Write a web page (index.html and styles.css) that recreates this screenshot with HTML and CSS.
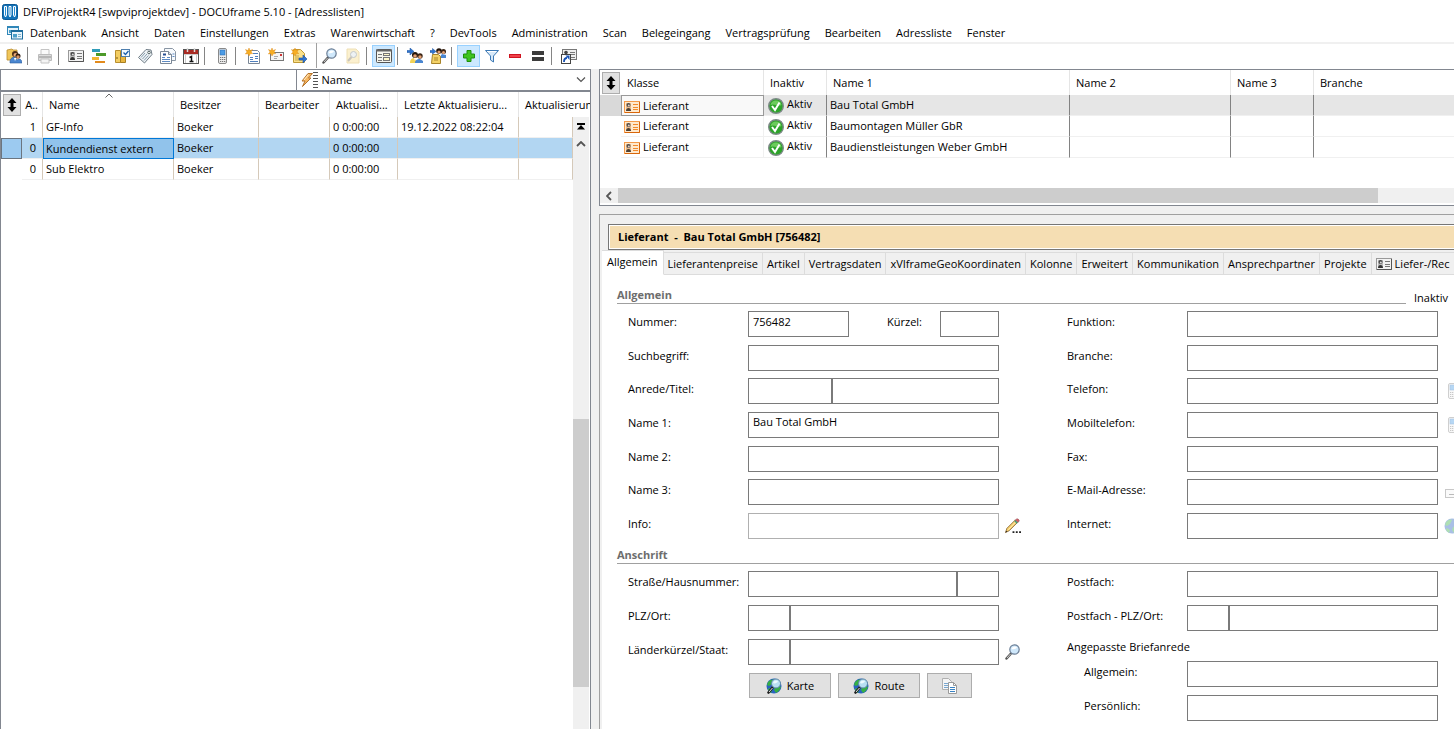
FILE: index.html
```html
<!DOCTYPE html>
<html lang="de">
<head>
  <meta charset="UTF-8">
  <title>DOCUframe 5.10 - Adresslisten</title>
  <link rel="stylesheet" href="styles.css">
</head>
<body>
  <!-- icon set -->
  <svg class="sprite" aria-hidden="true">
    <symbol id="i-app" viewBox="0 0 16 16">
      <rect x="0.5" y="0.5" width="15" height="15" rx="2" fill="#1272b8" stroke="#0d5a96"/>
      <path d="M2.500 2.500h2v8.500l-1 2-1-2zM7 2.500h2v8.500l-1 2-1-2zM11.500 2.500h2v8.500l-1 2-1-2z" fill="#2b8fd2" stroke="#fff"/>
    </symbol>
    <symbol id="i-mdi" viewBox="0 0 16 14">
      <rect x="0.5" y="0.5" width="11" height="8" fill="#e8f4fb" stroke="#2f86b8"/>
      <path d="M0 1h12" stroke="#2f86b8" stroke-width="2"/>
      <rect x="2" y="4" width="3" height="3" fill="#4b9fc9"/>
      <rect x="4.500" y="4.500" width="11" height="8.500" fill="#e8f4fb" stroke="#1d6d9e"/>
      <path d="M4 5h12" stroke="#1d6d9e" stroke-width="2"/>
      <rect x="6" y="8" width="4" height="3.500" fill="#4b9fc9"/>
      <path d="M11 8.500h3M11 10.500h3" stroke="#7fb4d0"/>
    </symbol>
    <symbol id="i-person" viewBox="0 0 16 16">
      <path d="M1 2l5-1 1 1h4v8l-4 2H1z" fill="#f0c65a" stroke="#b98b2c" stroke-width="0.800"/>
      <circle cx="9" cy="6" r="3" fill="#4a2c18"/><circle cx="9.500" cy="7" r="2" fill="#e8a878"/>
      <circle cx="12" cy="8" r="2.500" fill="#2e1c10"/><circle cx="12" cy="9" r="1.700" fill="#d89468"/>
      <path d="M4 14c0-4 3-5 5-5l2 3 2-1c2 0 3 2 3 4H4z" fill="#4a86d0" stroke="#2a5a9a" stroke-width="0.600"/>
      <path d="M8 10l1 3 1.500-3z" fill="#fff"/>
    </symbol>
    <symbol id="i-print" viewBox="0 0 16 16">
      <path d="M4 7V1.500h8V7" fill="#fafafa" stroke="#c4c4c4"/>
      <path d="M1.500 6.500h13v6h-13z" fill="#dcdcdc" stroke="#bcbcbc"/>
      <path d="M2 9h12" stroke="#aaa" stroke-width="1.500"/>
      <path d="M4 11h8v4H4z" fill="#f4f4f4" stroke="#c4c4c4"/>
    </symbol>
    <symbol id="i-card" viewBox="0 0 16 12">
      <rect x="0.500" y="0.500" width="15" height="11" fill="#f2f2f2" stroke="#999"/>
      <path d="M1 11.500h14.500V1" fill="none" stroke="#555"/>
      <rect x="2" y="2" width="5" height="8" fill="#bbb"/>
      <circle cx="4.500" cy="4" r="2" fill="#444"/><path d="M2 10c0-4 5-4 5 0z" fill="#333"/>
      <circle cx="4.800" cy="4.400" r="1" fill="#ddd"/>
      <path d="M9 3.500h5M9 6.500h5M9 8.500h5" stroke="#777"/>
    </symbol>
    <symbol id="i-ocard" viewBox="0 0 16 12">
      <rect x="0.500" y="0.500" width="15" height="11" fill="#ffe9cd" stroke="#f39a4a"/>
      <path d="M1 11.500h14.500V1" fill="none" stroke="#d8660a"/>
      <rect x="2" y="2" width="5" height="8" fill="#e9b98a"/>
      <circle cx="4.500" cy="4" r="2" fill="#4a4a4a"/><path d="M2 10c0-4 5-4 5 0z" fill="#4a4036"/>
      <circle cx="4.800" cy="4.400" r="1" fill="#e8d0c0"/>
      <path d="M9 3.500h5M9 6.500h5M9 8.500h5" stroke="#f08a2c"/>
    </symbol>
    <symbol id="i-gantt" viewBox="0 0 16 16">
      <path d="M1 2.500h8" stroke="#2f9cb8" stroke-width="3"/>
      <path d="M5 6.500h10" stroke="#4d9a2a" stroke-width="3"/>
      <path d="M1 10.500h7" stroke="#f2b632" stroke-width="3"/>
      <path d="M4 14h10" stroke="#e28a1c" stroke-width="2"/>
    </symbol>
    <symbol id="i-folder" viewBox="0 0 16 16">
      <path d="M1.500 2.500h5v12h-5z" fill="#f3cd62" stroke="#b98f2e"/>
      <path d="M6.500 4.500h5v10h-5z" fill="#e8b640" stroke="#a87f22"/>
      <rect x="7.500" y="1.500" width="8" height="7" fill="#f4faff" stroke="#4f7fae"/>
      <path d="M9.500 4.500l2 2 3-3.500" fill="none" stroke="#1a5fae" stroke-width="1.300"/>
      <path d="M3 9v2" stroke="#7a5a12"/>
    </symbol>
    <symbol id="i-tag" viewBox="0 0 16 16">
      <path d="M1.500 9.500l7.500-8 5 0.500 1 4.500-7.500 8.500z" fill="#edf2f5" stroke="#6f7c86"/>
      <circle cx="12" cy="4.500" r="1.300" fill="#fff" stroke="#566"/>
      <path d="M4 9.500l4-4.500M5.500 11l4.500-5M7 12.500l4.500-5" stroke="#7d94a6" stroke-width="0.900"/>
    </symbol>
    <symbol id="i-docs" viewBox="0 0 16 16">
      <path d="M4.500 0.500h8l3 3v9h-11z" fill="#f7fafd" stroke="#8a96a4"/>
      <path d="M12.500 6h2M12.500 8.500h2" stroke="#5d8ac4"/>
      <path d="M0.500 3.500h8l3 3v9h-11z" fill="#fff" stroke="#7a8796"/>
      <path d="M8.500 3.500v3h3" fill="#d5dde6" stroke="#7a8796"/>
      <path d="M2 9.500h3M7 9.500h3M2 11.500h8M2 13.500h8" stroke="#5d8ac4"/>
      <path d="M3 6.500h3" stroke="#274f93" stroke-width="2"/>
    </symbol>
    <symbol id="i-cal" viewBox="0 0 16 16">
      <rect x="0.500" y="1.500" width="15" height="14" fill="#fff" stroke="#555"/>
      <rect x="1" y="2" width="14" height="4" fill="#a82a22"/>
      <path d="M4.500 0v4M11.500 0v4" stroke="#ddd" stroke-width="1.500"/>
      <path d="M1 6.500h14M2.500 7v8M13.500 7v8" stroke="#ccc"/>
      <path d="M6.500 9.500l2-1v5M6.500 13.500h4" fill="none" stroke="#111" stroke-width="1.500"/>
    </symbol>
    <symbol id="i-phone" viewBox="0 0 16 16">
      <rect x="4.500" y="0.500" width="8" height="15" rx="1.500" fill="#eee" stroke="#8a8a8a"/>
      <rect x="6" y="2" width="5" height="5" fill="#4c9ce6" stroke="#2e70b4" stroke-width="0.600"/>
      <path d="M6 9.500h1.300M8 9.500h1.300M10 9.500h1.300M6 11.500h1.300M8 11.500h1.300M10 11.500h1.300M6 13.500h1.300M8 13.500h1.300M10 13.500h1.300" stroke="#777"/>
    </symbol>
    <symbol id="i-star" viewBox="0 0 8 8">
      <path d="M4 0l1 2.600L7.500 1.500 6 4l1.800 1.500-2.500.3L4 8 3 5.700.3 6 2 4 .5 1.500 3 2.600z" fill="#f7ae22" stroke="#d9820e" stroke-width="0.400"/>
    </symbol>
    <symbol id="i-newdoc" viewBox="0 0 16 16">
      <path d="M3.500 2.500h9l2 2v11h-11z" fill="#fff" stroke="#7a8796"/>
      <path d="M8 5.500h5M5 9.500h3M10 8.500h3M10 10.500h3M5 11.500h3M5 13.500h8" stroke="#4f7fbe"/>
      <use href="#i-star" width="8" height="8"/>
    </symbol>
    <symbol id="i-newmail" viewBox="0 0 16 16">
      <rect x="2.500" y="4.500" width="13" height="8" fill="#f4f4f4" stroke="#777"/>
      <path d="M6 8.500h4M6 10.500h3" stroke="#aaa"/><rect x="12" y="6" width="2" height="2" fill="#c33"/>
      <use href="#i-star" width="8" height="8"/>
    </symbol>
    <symbol id="i-newgo" viewBox="0 0 16 16">
      <path d="M2.500 1.500h7l4 4v9h-11z" fill="#f9e08a" stroke="#c09a36"/>
      <path d="M4 8h4M4 10h4M4 12h7" stroke="#c9a54a"/>
      <path d="M8 10h4V7l4 4-4 4v-3H8z" fill="#2f74d0" stroke="#174f9a" stroke-width="0.600"/>
      <use href="#i-star" width="8" height="8"/>
    </symbol>
    <symbol id="i-lens" viewBox="0 0 16 16">
      <path d="M6 9.500L1.500 14.500" stroke="#555" stroke-width="2.500" stroke-linecap="round"/>
      <path d="M5.500 10L2 14" stroke="#ccc" stroke-width="1"/>
      <circle cx="9.500" cy="5.500" r="4.700" fill="#cfe8fb" stroke="#6c7f96" stroke-width="1.200"/>
      <path d="M6.500 5c.5-2.500 4-3.500 5.500-1.500-1 1.500-3 2-5.500 1.500z" fill="#fff"/>
    </symbol>
    <symbol id="i-lensdoc" viewBox="0 0 16 16">
      <path d="M2 1h9l3 3v11H2z" fill="#fbf0cf" stroke="#eedfb4"/>
      <circle cx="8.500" cy="6.500" r="3" fill="#eef2f4" stroke="#c4c8cb"/>
      <path d="M6.500 9L3 13" stroke="#c8c4bb" stroke-width="2"/>
    </symbol>
    <symbol id="i-form" viewBox="0 0 16 16">
      <rect x="0.500" y="1.500" width="15" height="13" rx="1" fill="#f6f6ee" stroke="#555"/>
      <path d="M0 2.500h16" stroke="#666" stroke-width="2"/>
      <path d="M2 6.500h4M2 9.500h4M2 12.500h4" stroke="#777"/>
      <rect x="7.500" y="5.500" width="6" height="2" fill="#fff8c8" stroke="#777"/>
      <rect x="7.500" y="9.500" width="6" height="3" fill="#fff8c8" stroke="#777"/>
    </symbol>
    <symbol id="i-group" viewBox="0 0 16 16">
      <path d="M0 2.500h3V0l4 3.500L3 7V4.500H0z" fill="#2f74d0" stroke="#174f9a" stroke-width="0.500"/>
      <circle cx="8" cy="7" r="3" fill="#22150c"/><circle cx="8" cy="8" r="1.800" fill="#e2a074"/>
      <circle cx="13" cy="8" r="2.700" fill="#3a2414"/><circle cx="13" cy="9" r="1.700" fill="#e2a074"/>
      <path d="M3 15c0-4 2-5 5-5l2 5z" fill="#f2d254"/><path d="M8 15c0-3 2-4 5-4l3 2v2z" fill="#4a86d0"/>
      <path d="M7 10l1 3 1-3z" fill="#fff"/>
    </symbol>
    <symbol id="i-groupdoc" viewBox="0 0 16 16">
      <circle cx="9" cy="3" r="2.800" fill="#22150c"/><circle cx="9" cy="4" r="1.600" fill="#e2a074"/>
      <circle cx="13.500" cy="3.500" r="2.500" fill="#3a2414"/><circle cx="13.500" cy="4.500" r="1.500" fill="#e2a074"/>
      <path d="M9 10l3-4 4 1v3z" fill="#4a86d0"/>
      <path d="M2.500 6.500h6l2 2v7h-9z" fill="#f3d268" stroke="#a8842a"/>
      <path d="M4 10h4M4 12h4" stroke="#a8842a"/>
      <path d="M0 2.500h2.500V0.500L6 3.500 2.500 6V4.500H0z" fill="#2f74d0" stroke="#174f9a" stroke-width="0.500"/>
    </symbol>
    <symbol id="i-plus" viewBox="0 0 16 16">
      <path d="M6 2.500h4V6h3.500v4H10v3.500H6V10H2.500V6H6z" fill="#3fc41e" stroke="#1f8f0c"/>
    </symbol>
    <symbol id="i-filter" viewBox="0 0 16 16">
      <path d="M1.500 2.500h13L9.500 8v6l-3-2V8z" fill="#d6e8f8" stroke="#3b78b4"/>
      <path d="M3 3.500h9" stroke="#fff"/>
    </symbol>
    <symbol id="i-minus" viewBox="0 0 16 16">
      <rect x="2.500" y="6.500" width="11" height="3" fill="#f0424a" stroke="#cf1420"/>
    </symbol>
    <symbol id="i-equal" viewBox="0 0 16 16">
      <path d="M2 5h12M2 11h12" stroke="#3c3c3c" stroke-width="4"/>
    </symbol>
    <symbol id="i-link" viewBox="0 0 16 16">
      <rect x="1.500" y="1.500" width="14" height="10" fill="#eee" stroke="#777"/>
      <circle cx="5" cy="4.500" r="1.800" fill="#444"/><path d="M9 4.500h5M9 6.500h5M10 9.500h4" stroke="#777"/>
      <rect x="0.500" y="6.500" width="9" height="9" fill="#fff" stroke="#444"/>
      <path d="M3 14c0-3 1-4 3-4" fill="none" stroke="#1450b4" stroke-width="1.800"/>
      <path d="M4.500 7.500h4v4.500z" fill="#1450b4"/>
    </symbol>
    <symbol id="i-flash" viewBox="0 0 12 14">
      <path d="M7 0.500h4.500L7.500 5H10L1.500 13.500 4 8H1z" fill="#f6b660" stroke="#b5732a"/>
      <path d="M7.500 1.500L3 7" stroke="#fff0d0"/>
    </symbol>
    <symbol id="i-grip" viewBox="0 0 5 16">
      <path d="M0 0.500h5M0 3.500h5M0 6.500h5M0 9.500h5M0 12.500h5M0 15.500h5" stroke="#555"/>
    </symbol>
    <symbol id="i-updown" viewBox="0 0 10 14">
      <path d="M5 0l4.500 5H6.500v4h3L5 14 .5 9h3V5h-3z" fill="#000"/>
    </symbol>
    <symbol id="i-down" viewBox="0 0 10 6"><path d="M1 0.500l4 4 4-4" fill="none" stroke="#555" stroke-width="1.200"/></symbol>
    <symbol id="i-up" viewBox="0 0 10 6"><path d="M1 5l4-4 4 4" fill="none" stroke="#555" stroke-width="1.800"/></symbol>
    <symbol id="i-sort" viewBox="0 0 8 5"><path d="M0.500 4.500L4 1l3.500 3.500" fill="none" stroke="#666"/></symbol>
    <symbol id="i-left" viewBox="0 0 6 10"><path d="M5 1L1 5l4 4" fill="none" stroke="#555" stroke-width="1.800"/></symbol>
    <symbol id="i-top" viewBox="0 0 8 7"><path d="M0 1h8" stroke="#000" stroke-width="2"/><path d="M4 2l4 4.500H0z" fill="#000"/></symbol>
    <symbol id="i-check" viewBox="0 0 16 16">
      <circle cx="8" cy="8" r="7.300" fill="#2da32a" stroke="#7c8a86" stroke-width="1.400"/>
      <path d="M2.500 7a5.600 5.600 0 0 1 11 0C10 9 6 5 2.500 7z" fill="#6ccb5c"/>
      <path d="M4 8l3 4 4.500-7.500" fill="none" stroke="#fff" stroke-width="2"/>
    </symbol>
    <symbol id="i-pencil" viewBox="0 0 17 16">
      <path d="M0.500 15l1.500-4.500L11 1.500 13.500 4 4.500 13z" fill="#f5cd6a" stroke="#8a6a3a" stroke-width="0.900"/>
      <path d="M3.500 12L12 3" stroke="#fff0b8"/>
      <path d="M11 1.500l1.500-1c1-.5 3 1 2.500 2.500l-1.500 1z" fill="#d8606a" stroke="#8a4a50" stroke-width="0.600"/>
      <path d="M10.500 2.500l2.500 2.500" stroke="#3f9a7a" stroke-width="1.500"/>
      <path d="M0.500 15l.8-2 1.200 1.200z" fill="#222"/>
      <path d="M8 14.500h2M11.500 14.500h2M15 14.500h2" stroke="#222" stroke-width="2"/>
    </symbol>
    <symbol id="i-globe" viewBox="0 0 16 16">
      <circle cx="8" cy="8" r="7.500" fill="#2b62c0"/>
      <path d="M2 4c3-3 5-3 6-2L6 6 3 8 1 7zM9 9l4-1 2 1c-1 3-3 5-5 6l-2-3zM3 10l3 2-1 3c-2-1-3-3-3-4z" fill="#36b044"/>
    </symbol>
    <symbol id="i-map" viewBox="0 0 16 16">
      <use href="#i-globe" width="16" height="16"/>
      <path d="M7 9L2.500 14.500" stroke="#222" stroke-width="2.600" stroke-linecap="round"/>
      <path d="M6.500 10L3 14" stroke="#ddd"/>
      <circle cx="10" cy="5.500" r="4.500" fill="#b8dff2" stroke="#5d87a4"/>
      <path d="M7 5c1-3 4-3 5-1.500C11 5 9 6 7 5z" fill="#eefaff"/>
    </symbol>
    <symbol id="i-copy" viewBox="0 0 16 16">
      <path d="M0.500 0.500h6l3 3v8h-9z" fill="#f5f5f5" stroke="#b0b0b0"/>
      <path d="M2 5.500h5M2 7.500h4M2 9.500h4" stroke="#7aa7cf"/>
      <path d="M6.500 4.500h5l3 3v8h-8z" fill="#fff" stroke="#9a9a9a"/>
      <path d="M11.500 4.500v3h3" fill="none" stroke="#9a9a9a"/>
      <path d="M8 9.500h5M8 11.500h5M8 13.500h5" stroke="#3a83c4"/>
    </symbol>
    <symbol id="i-mail" viewBox="0 0 16 16">
      <rect x="1.500" y="5.500" width="13" height="8" fill="#f4f4f4" stroke="#777"/>
      <path d="M5 10.500h5" stroke="#555"/>
    </symbol>
  </svg>

  <div class="window">
    <header class="titlebar">
      <svg class="icon"><use href="#i-app"/></svg>
      <span>DFViProjektR4 [swpviprojektdev] - DOCUframe 5.10 - [Adresslisten]</span>
    </header>

    <nav class="menubar">
      <svg class="icon"><use href="#i-mdi"/></svg>
      <button>Datenbank</button>
      <button>Ansicht</button>
      <button>Daten</button>
      <button>Einstellungen</button>
      <button>Extras</button>
      <button>Warenwirtschaft</button>
      <button>?</button>
      <button>DevTools</button>
      <button>Administration</button>
      <button>Scan</button>
      <button>Belegeingang</button>
      <button>Vertragsprüfung</button>
      <button>Bearbeiten</button>
      <button>Adressliste</button>
      <button>Fenster</button>
    </nav>

    <div class="toolbar">
      <button aria-label="Benutzer"><svg class="icon"><use href="#i-person"/></svg></button>
      <span class="sep"></span>
      <button aria-label="Drucken" disabled><svg class="icon"><use href="#i-print"/></svg></button>
      <span class="sep"></span>
      <button aria-label="Adressen"><svg class="id-card"><use href="#i-card"/></svg></button>
      <button aria-label="Projekte"><svg class="icon"><use href="#i-gantt"/></svg></button>
      <button aria-label="Aufgaben"><svg class="icon"><use href="#i-folder"/></svg></button>
      <button aria-label="Artikel"><svg class="icon"><use href="#i-tag"/></svg></button>
      <button aria-label="Dokumente"><svg class="icon"><use href="#i-docs"/></svg></button>
      <button aria-label="Kalender"><svg class="icon"><use href="#i-cal"/></svg></button>
      <span class="sep"></span>
      <button aria-label="Telefon"><svg class="icon"><use href="#i-phone"/></svg></button>
      <span class="sep"></span>
      <button aria-label="Neues Dokument"><svg class="icon"><use href="#i-newdoc"/></svg></button>
      <button aria-label="Neue E-Mail"><svg class="icon"><use href="#i-newmail"/></svg></button>
      <button aria-label="Neue Notiz"><svg class="icon"><use href="#i-newgo"/></svg></button>
      <span class="sep sep-full"></span>
      <button aria-label="Suchen"><svg class="icon"><use href="#i-lens"/></svg></button>
      <button aria-label="Suche im Dokument" disabled><svg class="icon"><use href="#i-lensdoc"/></svg></button>
      <span class="sep"></span>
      <button aria-label="Maske" class="pressed"><svg class="icon"><use href="#i-form"/></svg></button>
      <span class="sep"></span>
      <button aria-label="Gruppe"><svg class="icon"><use href="#i-group"/></svg></button>
      <button aria-label="Gruppendokument"><svg class="icon"><use href="#i-groupdoc"/></svg></button>
      <span class="sep"></span>
      <button aria-label="Hinzufügen" class="pressed"><svg class="icon"><use href="#i-plus"/></svg></button>
      <button aria-label="Filter"><svg class="icon"><use href="#i-filter"/></svg></button>
      <button aria-label="Entfernen"><svg class="icon"><use href="#i-minus"/></svg></button>
      <button aria-label="Gleich"><svg class="icon"><use href="#i-equal"/></svg></button>
      <span class="sep"></span>
      <button aria-label="Verknüpfung"><svg class="icon"><use href="#i-link"/></svg></button>
    </div>

    <main class="workspace">
      <section class="list-pane">
        <div class="search-row">
          <input type="text" aria-label="Suche">
          <div class="combo">
            <svg class="flash"><use href="#i-flash"/></svg>
            <svg class="grip"><use href="#i-grip"/></svg>
            <select aria-label="Suchfeld"><option>Name</option></select>
            <svg class="chevron"><use href="#i-down"/></svg>
          </div>
        </div>
        <div class="list-body">
          <table class="grid lists">
            <colgroup>
              <col class="w-mark"><col class="w-num"><col class="w-name"><col class="w-owner"><col class="w-editor"><col class="w-akt"><col class="w-last"><col><col class="w-scroll">
            </colgroup>
            <thead>
              <tr>
                <th class="mark"><button class="fit" aria-label="Zeilen anpassen"><svg><use href="#i-updown"/></svg></button></th>
                <th class="num">A..</th>
                <th class="sorted">Name<svg><use href="#i-sort"/></svg></th>
                <th>Besitzer</th>
                <th>Bearbeiter</th>
                <th>Aktualisi...</th>
                <th>Letzte Aktualisieru...</th>
                <th colspan="2">Aktualisierun</th>
              </tr>
            </thead>
            <tbody>
              <tr><td class="mark"></td><td class="num">1</td><td>GF-Info</td><td>Boeker</td><td></td><td>0 0:00:00</td><td>19.12.2022 08:22:04</td><td></td><td class="mark"></td></tr>
              <tr class="selected"><td class="mark"></td><td class="num">0</td><td class="focus">Kundendienst extern</td><td>Boeker</td><td></td><td>0 0:00:00</td><td></td><td></td><td class="mark"></td></tr>
              <tr><td class="mark"></td><td class="num">0</td><td>Sub Elektro</td><td>Boeker</td><td></td><td>0 0:00:00</td><td></td><td></td><td class="mark"></td></tr>
            </tbody>
          </table>
          <div class="vscroll">
            <button aria-label="Zum Anfang"><svg class="to-top"><use href="#i-top"/></svg></button>
            <button aria-label="Nach oben"><svg class="up"><use href="#i-up"/></svg></button>
            <div class="vtrack"><div class="vthumb"></div></div>
          </div>
        </div>
      </section>

      <div class="detail-pane">
        <section class="addresses">
          <table class="grid results">
            <colgroup>
              <col class="r-mark"><col class="r-klasse"><col class="r-inaktiv"><col class="r-name1"><col class="r-name2"><col class="r-name3"><col>
            </colgroup>
            <thead>
              <tr>
                <th class="mark"><button class="fit" aria-label="Zeilen anpassen"><svg><use href="#i-updown"/></svg></button></th>
                <th>Klasse</th><th>Inaktiv</th><th>Name 1</th><th>Name 2</th><th>Name 3</th><th>Branche</th>
              </tr>
            </thead>
            <tbody>
              <tr class="current"><td class="mark"></td><td class="focus"><svg class="card"><use href="#i-ocard"/></svg>Lieferant</td><td><svg class="check"><use href="#i-check"/></svg>Aktiv</td><td>Bau Total GmbH</td><td></td><td></td><td></td></tr>
              <tr><td class="mark"></td><td><svg class="card"><use href="#i-ocard"/></svg>Lieferant</td><td><svg class="check"><use href="#i-check"/></svg>Aktiv</td><td>Baumontagen Müller GbR</td><td></td><td></td><td></td></tr>
              <tr><td class="mark"></td><td><svg class="card"><use href="#i-ocard"/></svg>Lieferant</td><td><svg class="check"><use href="#i-check"/></svg>Aktiv</td><td>Baudienstleistungen Weber GmbH</td><td></td><td></td><td></td></tr>
            </tbody>
          </table>
          <div class="hscroll">
            <button aria-label="Nach links"><svg><use href="#i-left"/></svg></button>
            <div class="hthumb"></div>
          </div>
        </section>

        <section class="record">
          <h1 class="banner">Lieferant &nbsp;-&nbsp; Bau Total GmbH [756482]</h1>
          <div class="tabs" role="tablist">
            <button role="tab" aria-selected="true" class="active">Allgemein</button>
            <button role="tab">Lieferantenpreise</button>
            <button role="tab">Artikel</button>
            <button role="tab">Vertragsdaten</button>
            <button role="tab">xVIframeGeoKoordinaten</button>
            <button role="tab">Kolonne</button>
            <button role="tab">Erweitert</button>
            <button role="tab">Kommunikation</button>
            <button role="tab">Ansprechpartner</button>
            <button role="tab">Projekte</button>
            <button role="tab"><svg class="card"><use href="#i-card"/></svg>Liefer-/Rec</button>
          </div>

          <form class="sheet">
            <div class="section-head">
              <h2>Allgemein</h2>
              <span class="state">Inaktiv</span>
            </div>
            <div class="columns general">
              <div class="col">
                <div class="field">
                  <label for="nummer">Nummer:</label>
                  <div class="control">
                    <input id="nummer" class="medium" value="756482">
                    <label for="kuerzel" class="inner">Kürzel:</label>
                    <input id="kuerzel">
                  </div>
                </div>
                <div class="field"><label for="such">Suchbegriff:</label><div class="control"><input id="such"></div></div>
                <div class="field"><label for="anrede">Anrede/Titel:</label><div class="control split"><input id="anrede" class="title"><input aria-label="Titel"></div></div>
                <div class="field"><label for="name1">Name 1:</label><div class="control"><input id="name1" value="Bau Total GmbH"></div></div>
                <div class="field"><label for="name2">Name 2:</label><div class="control"><input id="name2"></div></div>
                <div class="field"><label for="name3">Name 3:</label><div class="control"><input id="name3"></div></div>
                <div class="field"><label for="info">Info:</label><div class="control"><input id="info" class="light" readonly></div><button type="button" class="tool" aria-label="Info bearbeiten"><svg class="icon"><use href="#i-pencil"/></svg></button></div>
              </div>
              <div class="col">
                <div class="field"><label for="funktion">Funktion:</label><div class="control"><input id="funktion"></div></div>
                <div class="field"><label for="branche">Branche:</label><div class="control"><input id="branche"></div></div>
                <div class="field"><label for="telefon">Telefon:</label><div class="control"><input id="telefon"></div><button type="button" class="tool" aria-label="Anrufen" disabled><svg class="icon"><use href="#i-phone"/></svg></button></div>
                <div class="field"><label for="mobil">Mobiltelefon:</label><div class="control"><input id="mobil"></div><button type="button" class="tool" aria-label="Mobil anrufen" disabled><svg class="icon"><use href="#i-phone"/></svg></button></div>
                <div class="field"><label for="fax">Fax:</label><div class="control"><input id="fax"></div></div>
                <div class="field"><label for="mail">E-Mail-Adresse:</label><div class="control"><input id="mail"></div><button type="button" class="tool" aria-label="E-Mail schreiben" disabled><svg class="icon"><use href="#i-mail"/></svg></button></div>
                <div class="field"><label for="web">Internet:</label><div class="control"><input id="web"></div><button type="button" class="tool" aria-label="Webseite öffnen" disabled><svg class="icon"><use href="#i-globe"/></svg></button></div>
              </div>
            </div>

            <div class="section-head address-head">
              <h2>Anschrift</h2>
            </div>
            <div class="columns">
              <div class="col address">
                <div class="field"><label for="strasse">Straße/Hausnummer:</label><div class="control split"><input id="strasse"><input class="short" aria-label="Hausnummer"></div></div>
                <div class="field"><label for="plz">PLZ/Ort:</label><div class="control split"><input id="plz" class="short"><input aria-label="Ort"></div></div>
                <div class="field"><label for="land">Länderkürzel/Staat:</label><div class="control split"><input id="land" class="short"><input aria-label="Staat"></div><button type="button" class="tool" aria-label="Staat suchen"><svg class="icon"><use href="#i-lens"/></svg></button></div>
                <div class="actions">
                  <button type="button"><svg class="icon"><use href="#i-map"/></svg>Karte</button>
                  <button type="button"><svg class="icon"><use href="#i-map"/></svg>Route</button>
                  <button type="button" class="copy" aria-label="Kopieren"><svg class="icon"><use href="#i-copy"/></svg></button>
                </div>
              </div>
              <div class="col address">
                <div class="field"><label for="postfach">Postfach:</label><div class="control"><input id="postfach"></div></div>
                <div class="field"><label for="pfplz">Postfach - PLZ/Ort:</label><div class="control split"><input id="pfplz" class="short"><input aria-label="Postfach Ort"></div></div>
                <p class="caption">Angepasste Briefanrede</p>
                <div class="field sub"><label for="anr-allg">Allgemein:</label><div class="control"><input id="anr-allg"></div></div>
                <div class="field sub"><label for="anr-pers">Persönlich:</label><div class="control"><input id="anr-pers"></div></div>
              </div>
            </div>
          </form>
        </section>
      </div>
    </main>
  </div>
</body>
</html>
```
FILE: styles.css
```css
* {
  box-sizing: border-box;
}

body {
  margin: 0;
  background: #fff;
  color: #000;
  font-family: "Open Sans", "Noto Sans", sans-serif;
  font-size: 11px;
  line-height: 16px;
}

button,
input,
select {
  font: inherit;
  color: inherit;
  margin: 0;
  padding: 0;
  border: 0;
  background: none;
  border-radius: 0;
}

svg {
  display: block;
  flex: none;
}

.sprite {
  position: absolute;
  width: 0;
  height: 0;
}

.icon {
  width: 16px;
  height: 16px;
}

.window {
  display: flex;
  flex-direction: column;
  height: 100vh;
  overflow: hidden;
}

/* title, menu and toolbar */
.titlebar {
  display: flex;
  align-items: center;
  gap: 5px;
  height: 23px;
  padding-left: 2px;
}

.menubar {
  display: flex;
  align-items: center;
  gap: 15px;
  height: 19px;
  padding-left: 7px;
  white-space: nowrap;
}

.menubar .icon {
  margin-right: -8px;
}

.toolbar {
  display: flex;
  align-items: center;
  height: 27px;
  padding: 0 0 2px 2px;
  border-top: 2px solid #f0f0f0;
}

.toolbar button {
  display: flex;
  align-items: center;
  justify-content: center;
  width: 23px;
  height: 22px;
}

.toolbar .pressed {
  background: #cce8ff;
  border: 1px solid #99d1ff;
}

.id-card {
  width: 16px;
  height: 12px;
}

.sep {
  width: 8px;
  height: 18px;
  padding-left: 2px;
}

.sep::before {
  content: "";
  display: block;
  width: 1px;
  height: 100%;
  background: #858585;
}

.sep-full {
  height: 25px;
  padding-left: 6px;
}

.sep-full::before {
  background: #a0a0a0;
}

/* panes */
.workspace {
  flex: 1;
  display: grid;
  grid-template-columns: 591px minmax(0, 1fr);
  column-gap: 8px;
  min-height: 0;
  background: #f0f0f0;
}

.list-pane {
  display: flex;
  flex-direction: column;
  min-width: 0;
  background: #fff;
  border-left: 1px solid #828790;
  border-right: 1px solid #828790;
}

.search-row {
  display: grid;
  grid-template-columns: 1fr 1fr;
  height: 23px;
  border-top: 1px solid #828790;
  border-bottom: 2px solid #828790;
}

.search-row input {
  min-width: 0;
  padding: 0 4px;
}

.combo {
  display: flex;
  align-items: center;
  min-width: 0;
  padding: 0 4px;
  border-left: 1px solid #828790;
}

.flash {
  width: 12px;
  height: 14px;
}

.grip {
  width: 5px;
  height: 16px;
}

.combo select {
  flex: 1;
  padding-left: 4px;
  appearance: none;
}

.chevron {
  width: 10px;
  height: 6px;
}

.list-body {
  flex: 1;
  position: relative;
  overflow: hidden;
}

/* data grids */
.grid {
  width: 100%;
  table-layout: fixed;
  border-collapse: separate;
  border-spacing: 0;
  white-space: nowrap;
}

.grid th {
  height: 25px;
  padding: 0 0 0 6px;
  border-right: 1px solid #e5e5e5;
  font-weight: 400;
  text-align: left;
  overflow: hidden;
}

.grid td {
  height: 21px;
  padding: 0 0 0 3px;
  border-right: 1px solid #d5c9b9;
  border-bottom: 1px solid #f0f0f0;
  overflow: hidden;
}

.grid .focus {
  padding-left: 2px;
}

.grid .mark {
  padding: 0;
  border-right: 0;
  border-bottom-color: transparent;
}

.grid th:last-child,
.results td:last-child {
  border-right: 0;
}

.fit {
  display: flex;
  align-items: center;
  justify-content: center;
  width: 18px;
  height: 22px;
  margin-left: 2px;
  background: #e1e1e1;
  border: 1px solid #adadad;
}

.fit svg {
  width: 10px;
  height: 14px;
}

.grid .num {
  padding: 0 6px 0 0;
  text-align: right;
}

.grid th.num {
  padding: 0 4px 0 0;
}

.sorted {
  position: relative;
}

.sorted svg {
  position: absolute;
  top: 1px;
  left: 62px;
  width: 8px;
  height: 5px;
}

.w-mark { width: 21px; }
.w-num { width: 21px; }
.w-name { width: 131px; }
.w-owner { width: 85px; }
.w-editor { width: 71px; }
.w-akt { width: 68px; }
.w-last { width: 121px; }
.w-scroll { width: 17px; }

.lists .selected td {
  background: #b2d6f2;
}

.lists .selected .focus {
  background: #91c3eb;
  border: 1px solid #0078d7;
}

.lists .selected .mark:first-child {
  background: #9ccaf0;
  border: 1px solid #6b7580;
}

.lists .selected .mark:last-child {
  background: none;
}

.vscroll {
  position: absolute;
  top: 25px;
  right: 1px;
  bottom: 0;
  display: flex;
  flex-direction: column;
  width: 16px;
  background: #f0f0f0;
}

.vscroll button {
  display: flex;
  align-items: center;
  justify-content: center;
  height: 18px;
}

.to-top {
  width: 8px;
  height: 7px;
}

.up {
  width: 10px;
  height: 6px;
}

.vtrack {
  display: grid;
  flex: 1;
  grid-template-rows: 266fr 268fr 42fr;
}

.vthumb {
  grid-row: 2;
  background: #cdcdcd;
}

.detail-pane {
  display: flex;
  flex-direction: column;
  gap: 8px;
  min-width: 0;
}

.addresses {
  background: #fff;
  border: solid #828790;
  border-width: 1px 0 1px 1px;
}

.r-mark { width: 21px; }
.r-klasse { width: 143px; }
.r-inaktiv { width: 63px; }
.r-name1 { width: 243px; }
.r-name2 { width: 161px; }
.r-name3 { width: 83px; }

.results {
  margin-bottom: 30px;
}

.results td {
  border-right-color: #828282;
}

.results td:nth-child(2) {
  border-right-color: #f0f0f0;
}

.results td svg {
  display: inline-block;
  vertical-align: middle;
}

.card {
  width: 16px;
  height: 12px;
  margin-right: 3px;
}

.check {
  width: 16px;
  height: 16px;
  margin: 0 3px 0 1px;
}

.current td {
  background: #e6e6e6;
}

.current .mark {
  background: #d9d9d9;
}

.results .current .focus {
  background: #f9f9f9;
  border: 1px solid #999;
}

.hscroll {
  display: flex;
  height: 15px;
  margin-bottom: 2px;
  background: #f0f0f0;
}

.hscroll button {
  display: flex;
  align-items: center;
  justify-content: center;
  width: 18px;
}

.hscroll svg {
  width: 6px;
  height: 10px;
}

.hthumb {
  width: 89%;
  background: #cdcdcd;
}

/* record form */
.record {
  flex: 1;
  min-height: 0;
  overflow: hidden;
  padding: 9px 0 0 2px;
  border: solid #a0a0a0;
  border-width: 1px 0 0 1px;
}

.banner {
  height: 26px;
  margin: 0 0 0 6px;
  padding: 3px 9px;
  font-size: 11px;
  line-height: 18px;
  font-weight: 700;
  background: #f5deb3;
  border: solid #767676;
  border-width: 1px 0 1px 1px;
  box-shadow: inset 1px 1px #fff, inset 0 -1px #fff;
}

.tabs {
  display: flex;
  align-items: flex-end;
  height: 25px;
  white-space: nowrap;
}

.tabs button {
  display: flex;
  align-items: center;
  flex: none;
  height: 23px;
  padding: 0 4px;
  border: 1px solid #dcdcdc;
  border-left: 0;
}

.tabs .active {
  height: 25px;
  padding: 0 5px 1px;
  background: #fff;
  border-bottom-color: #fff;
}

.sheet {
  height: 100%;
  padding: 12px 0 0 15px;
  background: #fff;
}

.section-head {
  display: flex;
  align-items: flex-start;
  gap: 8px;
}

.section-head h2 {
  flex: 1;
  margin: 0 0 5px;
  font-size: 11px;
  line-height: 16px;
  font-weight: 700;
  color: #6d6d6d;
  border-bottom: 1px solid #a0a0a0;
}

.state {
  width: 40px;
  line-height: 22px;
}

.columns {
  display: flex;
  padding: 2px 0 0 11px;
}

.col {
  display: flex;
  flex-direction: column;
  flex: none;
  width: 439px;
}

.general .col {
  justify-content: space-between;
  min-height: 228px;
}

.field {
  display: flex;
}

.field label {
  width: 120px;
  padding-top: 3px;
  white-space: nowrap;
}

.control {
  display: flex;
  width: 251px;
}

.control input {
  flex: 1;
  min-width: 0;
  height: 26px;
  padding: 0 4px 6px;
  border: 1px solid #7a7a7a;
}

.control .medium {
  flex: none;
  width: 101px;
}

.control .inner {
  width: 91px;
  padding-left: 38px;
}

.control .title {
  flex: none;
  width: 84px;
}

.control .short {
  flex: none;
  width: 42px;
}

.control .light {
  border-color: #b0b0b0;
}

.tool {
  align-self: center;
  margin-left: 6px;
}

.tool:disabled {
  opacity: 0.4;
}

.address-head {
  padding-top: 8px;
}

.address {
  gap: 8px;
}

.actions {
  display: flex;
  gap: 7px;
  padding-left: 121px;
}

.actions button {
  display: flex;
  align-items: center;
  justify-content: center;
  gap: 5px;
  width: 82px;
  height: 25px;
  background: #e1e1e1;
  border: 1px solid #adadad;
}

.actions .copy {
  width: 45px;
}

.caption {
  margin: 0 0 -2px;
}

.sub label {
  padding-left: 17px;
}
```
